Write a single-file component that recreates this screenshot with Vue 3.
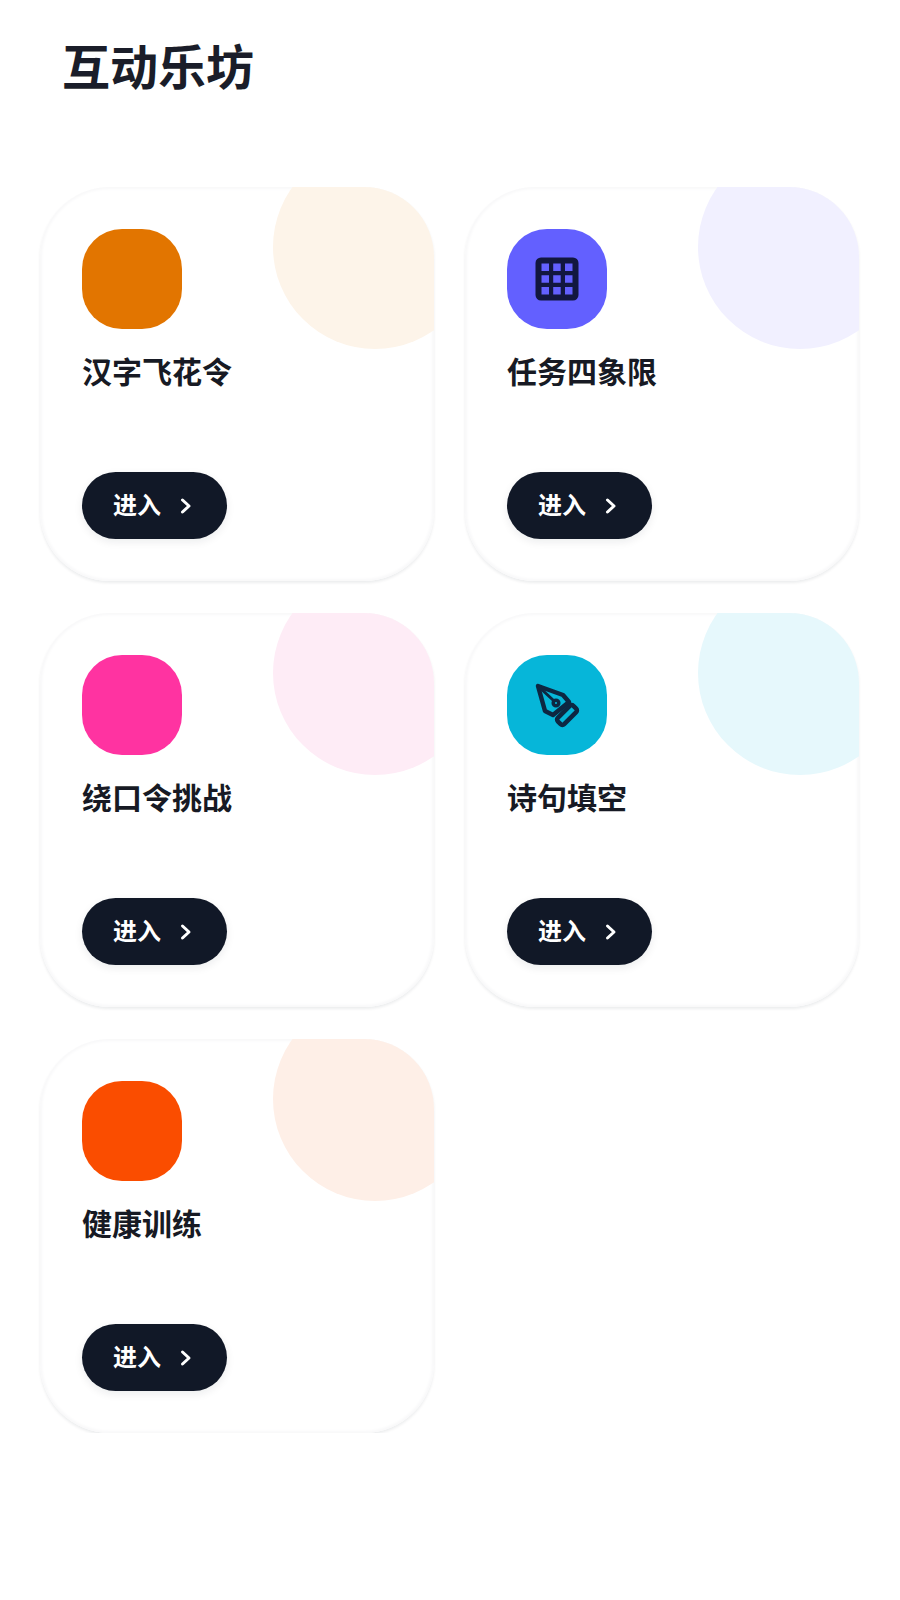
<script setup>
const games = [
  { title: '汉字飞花令', color: '#e27500', tint: '#fdf4e9', icon: '' },
  { title: '任务四象限', color: '#6360ff', tint: '#f1f0ff', icon: 'grid' },
  { title: '绕口令挑战', color: '#ff33a1', tint: '#feecf6', icon: '' },
  { title: '诗句填空', color: '#06b6d9', tint: '#e6f8fc', icon: 'pen' },
  { title: '健康训练', color: '#fa4d00', tint: '#feefe7', icon: '' },
];
</script>

<template>
  <div class="page">
    <h1 class="heading">互动乐坊</h1>
    <div class="grid">
      <div v-for="game in games" :key="game.title" class="card">
        <div class="blob" :style="{ background: game.tint }"></div>
        <div class="icon" :style="{ background: game.color }">
          <svg v-if="game.icon === 'grid'" width="48" height="48" viewBox="0 0 48 48">
            <path
              fill="#12173f"
              fill-rule="evenodd"
              d="M8 2.500h32a5.500 5.500 0 0 1 5.500 5.500v32a5.500 5.500 0 0 1-5.500 5.500H8a5.500 5.500 0 0 1-5.500-5.500V8A5.500 5.500 0 0 1 8 2.500zM8.500 8.500v7.500h7.500v-7.500zM20.200 8.500v7.500h7.500v-7.500zM32 8.500v7.500h7.500v-7.500zM8.500 20.200v7.500h7.500v-7.500zM20.200 20.200v7.500h7.500v-7.500zM32 20.200v7.500h7.500v-7.500zM8.500 32v7.500h7.500v-7.500zM20.200 32v7.500h7.500v-7.500zM32 32v7.500h7.500v-7.500z"
            />
          </svg>
          <svg
            v-else-if="game.icon === 'pen'"
            width="48"
            height="48"
            viewBox="0 0 48 48"
            fill="none"
            stroke="#0d2742"
            stroke-width="4.500"
            stroke-linejoin="round"
            stroke-linecap="round"
          >
            <path d="M5 5 L30 14 L36 21 L20 34 L12 30 Z" />
            <path d="M6 6 L20 19" stroke-width="3" />
            <circle cx="23" cy="22" r="2.800" stroke-width="3.500" />
            <rect x="23" y="29.500" width="22" height="9" rx="2.500" transform="rotate(-45 34 34)" />
          </svg>
        </div>
        <div class="title">{{ game.title }}</div>
        <button class="enter">
          <span>进入</span>
          <svg width="16" height="20" viewBox="0 0 16 20" fill="none" stroke="#fff" stroke-width="3" stroke-linecap="round" stroke-linejoin="round">
            <path d="M4.500 4 L11 10 L4.500 16" />
          </svg>
        </button>
      </div>
    </div>
  </div>
</template>

<style scoped>
.page {
  padding: 27px 40px 0;
  font-family: "Noto Sans CJK SC", "Noto Sans", sans-serif;
}

.heading {
  margin: 0 0 85px 22px;
  font-size: 48px;
  line-height: 75px;
  font-weight: 700;
  color: #1a1d29;
}

.grid {
  display: grid;
  grid-template-columns: 394px 394px;
  column-gap: 31px;
  row-gap: 32px;
}

.card {
  position: relative;
  height: 394px;
  box-sizing: border-box;
  padding: 42px;
  border-radius: 70px;
  background: #fff;
  box-shadow: inset 0 0 3px 2px #f8f8f9, 0 2px 3px rgba(15, 23, 42, 0.08);
  overflow: hidden;
  display: flex;
  flex-direction: column;
  align-items: flex-start;
}

.blob {
  position: absolute;
  top: -42px;
  right: -43px;
  width: 204px;
  height: 204px;
  border-radius: 50%;
}

.icon {
  position: relative;
  width: 100px;
  height: 100px;
  border-radius: 40px;
  display: flex;
  align-items: center;
  justify-content: center;
}

.title {
  position: relative;
  margin-top: 19px;
  font-size: 30px;
  line-height: 44px;
  font-weight: 700;
  color: #171a24;
}

.enter {
  position: relative;
  margin-top: auto;
  width: 145px;
  height: 67px;
  padding: 0 0 0 31px;
  border: none;
  border-radius: 34px;
  background: #111827;
  color: #fff;
  font-family: inherit;
  font-size: 24px;
  font-weight: 700;
  display: flex;
  align-items: center;
  gap: 17px;
  box-shadow: 0 3px 8px rgba(17, 24, 39, 0.08);
}

.enter span {
  line-height: 1;
  margin-top: -3px;
}
</style>
